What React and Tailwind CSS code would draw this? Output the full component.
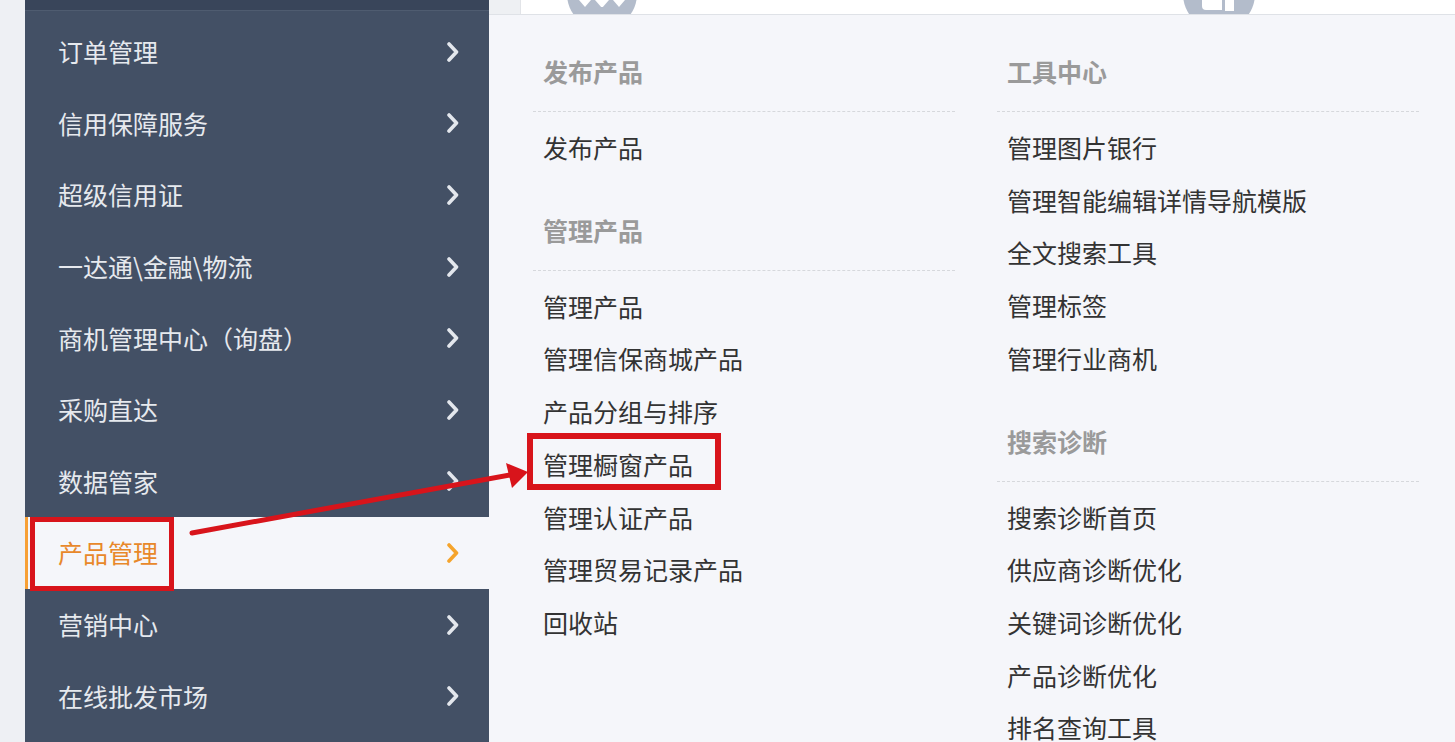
import { Fragment } from 'react';

const FONT = { fontFamily: '"Noto Sans CJK SC", "Noto Sans", sans-serif' };

const MENU = [
  '订单管理',
  '信用保障服务',
  '超级信用证',
  '一达通\\金融\\物流',
  '商机管理中心（询盘）',
  '采购直达',
  '数据管家',
  '产品管理',
  '营销中心',
  '在线批发市场',
];

const ACTIVE = '产品管理';

const LEFT_COL = [
  { title: '发布产品', links: ['发布产品'] },
  {
    title: '管理产品',
    links: [
      '管理产品',
      '管理信保商城产品',
      '产品分组与排序',
      '管理橱窗产品',
      '管理认证产品',
      '管理贸易记录产品',
      '回收站',
    ],
  },
];

const RIGHT_COL = [
  {
    title: '工具中心',
    links: ['管理图片银行', '管理智能编辑详情导航模版', '全文搜索工具', '管理标签', '管理行业商机'],
  },
  {
    title: '搜索诊断',
    links: ['搜索诊断首页', '供应商诊断优化', '关键词诊断优化', '产品诊断优化', '排名查询工具'],
  },
];

function Chevron({ active }) {
  return (
    <svg width="12" height="20" viewBox="0 0 12 20" className="shrink-0">
      <polyline
        points="2,2 9.5,10 2,18"
        fill="none"
        stroke={active ? '#f5a42c' : '#e3e7ed'}
        strokeWidth="3.6"
        strokeLinecap="round"
        strokeLinejoin="round"
      />
    </svg>
  );
}

function MenuItem({ label }) {
  const active = label === ACTIVE;
  return (
    <div
      className={
        active
          ? 'flex h-[71.6px] items-center justify-between border-l-[3px] border-[#f7a035] bg-[#f5f6fa] pl-[30px] pr-[30px]'
          : 'flex h-[71.6px] items-center justify-between pl-[33px] pr-[30px]'
      }
    >
      <span
        className={
          active
            ? 'text-[25px] leading-none text-[#e8882a]'
            : 'text-[25px] leading-none text-[#e6e9ee]'
        }
      >
        {label}
      </span>
      <Chevron active={active} />
    </div>
  );
}

function Section({ title, links }) {
  return (
    <div className="pt-[41px]">
      <div className="pl-[10px] text-[25px] font-bold leading-[30px] text-[#9a9a9a]">{title}</div>
      <div className="mt-[25px] border-t border-dashed border-[#d6d8dc]" />
      <ul className="mt-[9px] pl-[10px]">
        {links.map((l) => (
          <li key={l} className="text-[25px] leading-[52.7px] text-[#333333]">
            {l}
          </li>
        ))}
      </ul>
    </div>
  );
}

// Circles of the header icons, only their lower edge shows above the panel.
function BadgeIcon() {
  return (
    <svg width="70" height="14" viewBox="0 0 70 14" className="shrink-0">
      <circle cx="35" cy="-6" r="35" fill="#b3bccb" />
      <path d="M12 0 L18 7 L24 0 Z M28 0 L35 8 L42 0 Z M46 0 L52 7 L58 0 Z" fill="#ffffff" />
      <rect x="14" y="7" width="42" height="3" fill="#b3bccb" />
    </svg>
  );
}

function DocIcon() {
  return (
    <svg width="74" height="14" viewBox="0 0 74 14" className="shrink-0">
      <circle cx="37" cy="-6" r="36" fill="#b3bccb" />
      <path d="M20 0 H40 V10 H24 Q20 10 20 6 Z" fill="#ffffff" />
      <rect x="43" y="0" width="9" height="11" fill="#ffffff" />
    </svg>
  );
}

export default function App() {
  return (
    <div className="relative flex h-[742px] w-[1455px] overflow-hidden bg-[#eef0f4]" style={FONT}>
      <div className="w-[25px] shrink-0" />

      <aside className="flex w-[464px] shrink-0 flex-col bg-[#435065]">
        <div className="h-[11px] border-b border-[#4f5c70] bg-[#39455a]" />
        <div className="pt-[5px]">
          {MENU.map((m) => (
            <MenuItem key={m} label={m} />
          ))}
        </div>
      </aside>

      <main className="flex min-w-0 flex-1 flex-col">
        <div className="flex h-[15px] shrink-0 border-b border-[#dfe2e7]">
          <div className="w-[32px] shrink-0 border-r border-[#e2e4e8] bg-[#eef0f3]" />
          <div className="flex flex-1 items-start overflow-hidden bg-white pl-[46px]">
            <BadgeIcon />
            <div className="w-[545px] shrink-0" />
            <DocIcon />
          </div>
        </div>

        <div className="flex flex-1 gap-[42px] bg-[#f5f6fa] pl-[44px]">
          {[LEFT_COL, RIGHT_COL].map((col, i) => (
            <div key={i} className="w-[422px] shrink-0">
              {col.map((s) => (
                <Fragment key={s.title}>
                  <Section title={s.title} links={s.links} />
                </Fragment>
              ))}
            </div>
          ))}
        </div>
      </main>

      {/* red annotation marks drawn over the screenshot */}
      <svg
        className="pointer-events-none absolute left-0 top-0"
        width="1455"
        height="742"
        viewBox="0 0 1455 742"
      >
        <rect x="32.5" y="519.5" width="139" height="69" fill="none" stroke="#d8141b" strokeWidth="5" />
        <rect x="530" y="436" width="188" height="51" fill="none" stroke="#d8141b" strokeWidth="6" />
        <line x1="192" y1="533" x2="510" y2="475" stroke="#d8141b" strokeWidth="5" strokeLinecap="round" />
        <polygon points="506,463 528,472 512,488" fill="#d8141b" />
      </svg>
    </div>
  );
}
